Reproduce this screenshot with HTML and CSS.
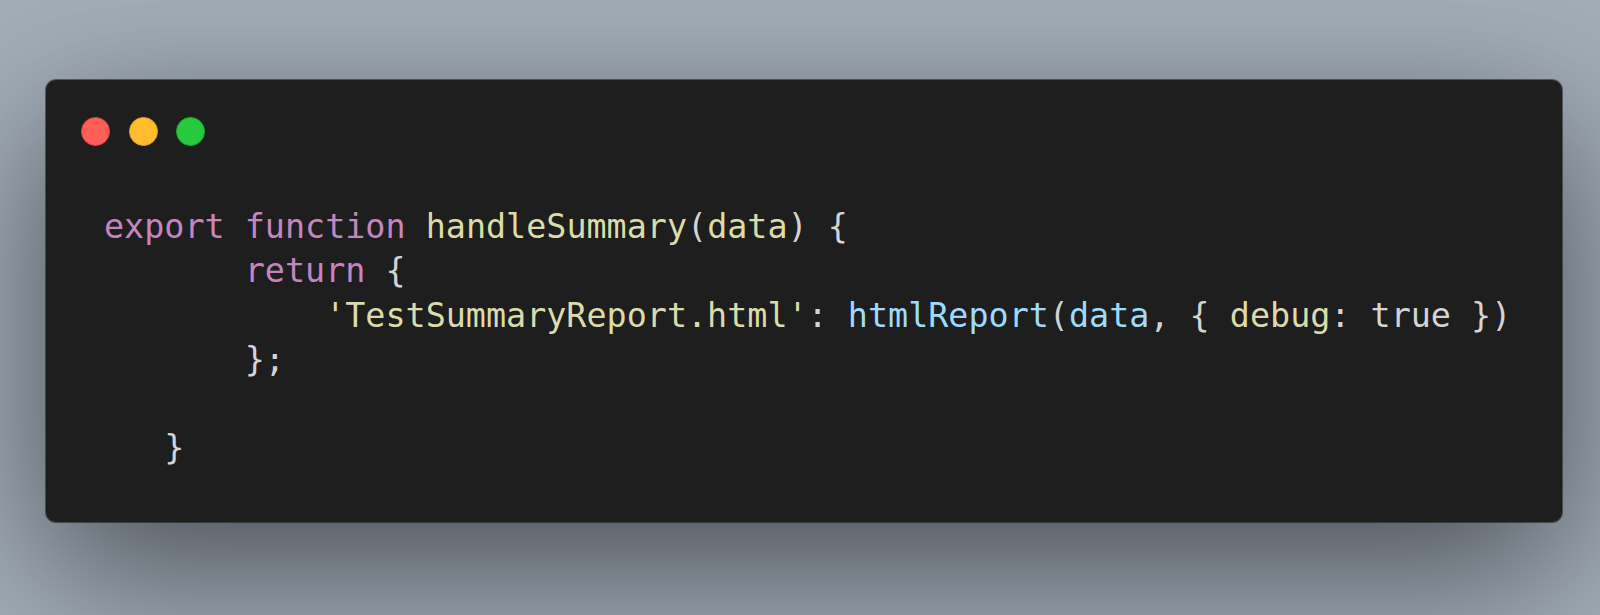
FILE: index.html
```html
<!DOCTYPE html>
<html lang="en">
<head>
<meta charset="utf-8">
<title>Code snippet</title>
<link rel="stylesheet" href="styles.css">
</head>
<body>
<div class="stage">
  <div class="window">
    <div class="titlebar">
      <span class="dot dot-red"></span>
      <span class="dot dot-yellow"></span>
      <span class="dot dot-green"></span>
    </div>
<pre class="code"><span class="kw">export</span> <span class="kw">function</span> <span class="fn">handleSummary</span><span class="pn">(</span><span class="fn">data</span><span class="pn">)</span> <span class="pn">{</span>
       <span class="kw">return</span> <span class="pn">{</span>
           <span class="str">'TestSummaryReport.html'</span><span class="pn">:</span> <span class="call">htmlReport</span><span class="pn">(</span><span class="call">data</span><span class="pn">,</span> <span class="pn">{</span> <span class="prop">debug</span><span class="pn">:</span> <span class="pn">true</span> <span class="pn">})</span>
       <span class="pn">};</span>

   <span class="pn">}</span></pre>
  </div>
</div>
</body>
</html>
```

FILE: styles.css
```css
html, body {
  margin: 0;
  padding: 0;
}

body {
  width: 1600px;
  height: 615px;
  overflow: hidden;
  background: #a3aeb9;
}

.stage {
  display: flex;
  align-items: flex-start;
  padding: 80px 38px 0 46px;
}

.window {
  width: 1516px;
  height: 442px;
  box-sizing: border-box;
  background: #1e1e1e;
  border-radius: 10px;
  box-shadow: 0 0 0 1px rgba(0, 0, 0, 0.45), 0 48px 150px rgba(0, 0, 0, 0.55);
  padding: 37px 0 0 35px;
}

.titlebar {
  display: flex;
  gap: 18.5px;
  height: 29px;
}

.dot {
  width: 29px;
  height: 29px;
  box-sizing: border-box;
  border-radius: 50%;
  border: 1px solid transparent;
}

.dot-red { background: #ff5f56; border-color: #e0443e; }
.dot-yellow { background: #ffbd2e; border-color: #dea123; }
.dot-green { background: #27c93f; border-color: #1aab29; }

.code {
  margin: 59px 0 0 23px;
  font-family: "DejaVu Sans Mono", "Liberation Mono", monospace;
  font-size: 33.4px;
  line-height: 44.3px;
  color: #d4d4d4;
  white-space: pre;
}

.kw { color: #c586c0; }
.fn { color: #dcdcaa; }
.str { color: #dcdcaa; }
.call { color: #9cdcfe; }
.prop { color: #dcdcaa; }
.pn { color: #d4d4d4; }
```
